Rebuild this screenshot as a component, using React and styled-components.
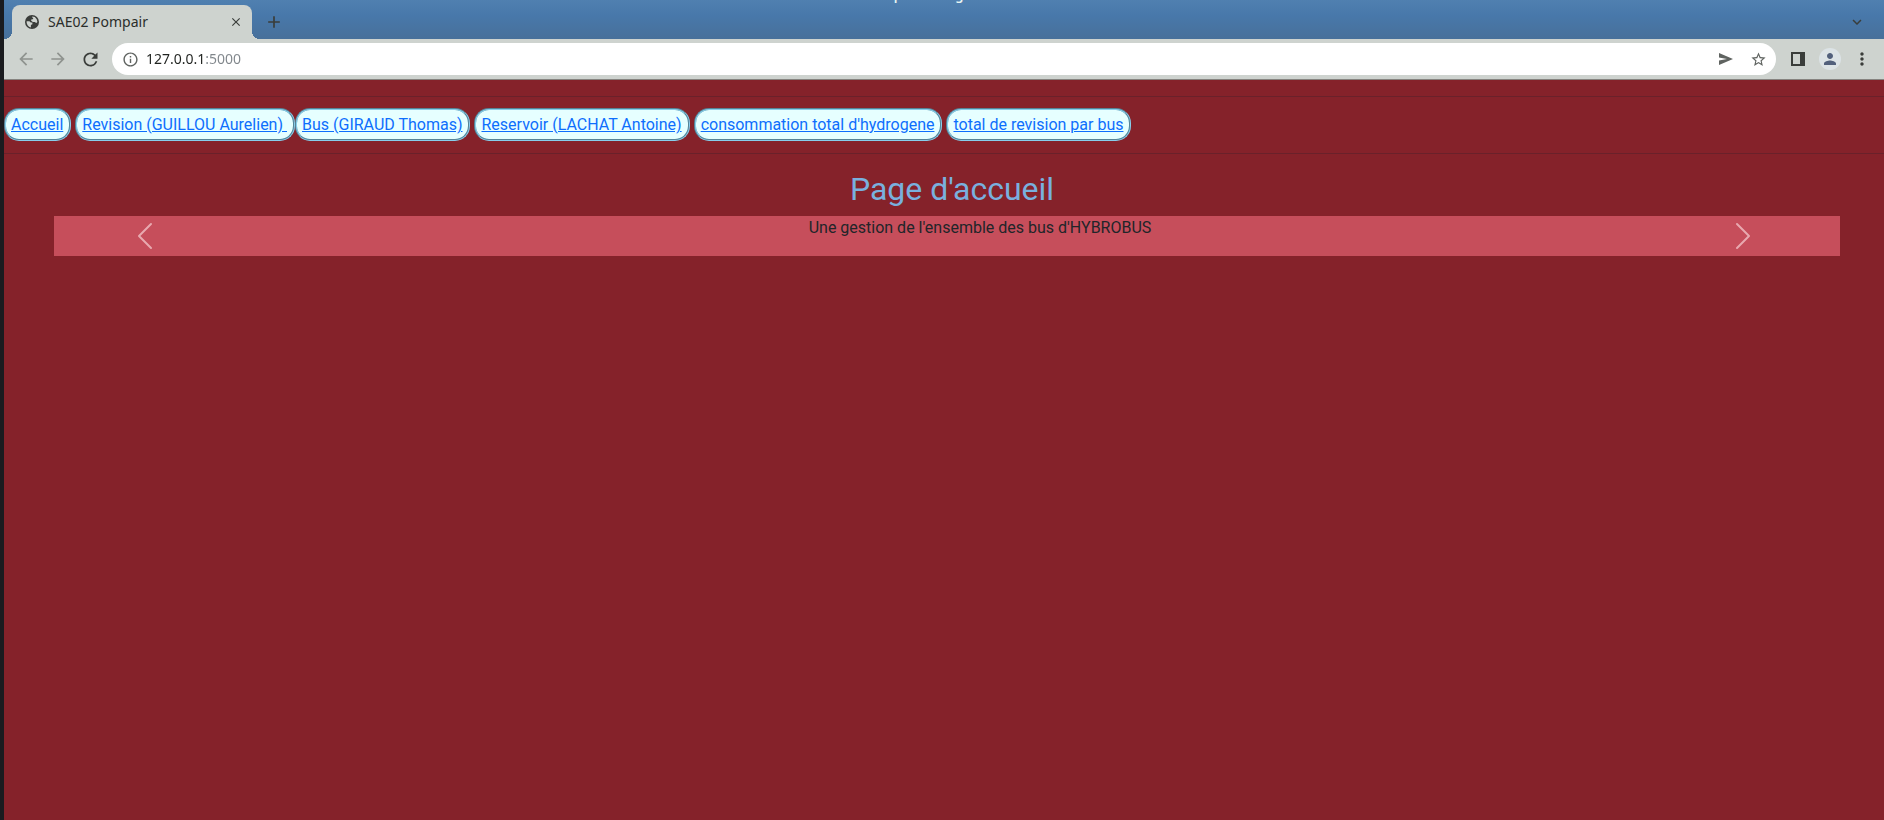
import React from "react";
import styled, { createGlobalStyle } from "styled-components";
import {
  MdArrowBack,
  MdArrowForward,
  MdRefresh,
  MdInfoOutline,
  MdStarOutline,
  MdMoreVert,
  MdPerson,
  MdAdd,
  MdClose,
  MdKeyboardArrowDown,
} from "react-icons/md";

const GlobalStyle = createGlobalStyle`
  *, *::before, *::after { box-sizing: border-box; }
  html, body, #root { height: 100%; }
  body {
    margin: 0;
    background: #85222a;
    color: #212529;
    font-family: Roboto, "Noto Sans", sans-serif;
    font-size: 16px;
    line-height: 24px;
  }
`;

const Window = styled.div`
  min-height: 100%;
  display: flex;
  flex-direction: column;
  border-left: 4px solid #1a1b1f;
`;

const TitleBar = styled.div`
  height: 3px;
  display: flex;
  align-items: flex-end;
  justify-content: center;
  overflow: hidden;
  padding-right: 36px;
  color: #e8f4f2;
  font: 600 13px/16px "Noto Sans", sans-serif;
`;

const TabStrip = styled.header`
  background: linear-gradient(#5080b0, #4878aa 40%, #48709a);
`;

const TabRow = styled.div`
  display: flex;
  align-items: center;
  height: 36px;
  padding: 2px 16px 0 8px;
`;

const Tab = styled.div`
  position: relative;
  display: flex;
  align-items: center;
  gap: 8px;
  width: 240px;
  height: 34px;
  padding: 0 8px 0 12px;
  border-radius: 8px 8px 0 0;
  background: #ced3cf;
  color: #2b2e2b;
  font: 14px/20px "Noto Sans", sans-serif;

  &::before,
  &::after {
    content: "";
    position: absolute;
    bottom: 0;
    width: 8px;
    height: 8px;
  }
  &::before {
    right: 100%;
    background: radial-gradient(circle at 0 0, transparent 8px, #ced3cf 8px);
  }
  &::after {
    left: 100%;
    background: radial-gradient(circle at 100% 0, transparent 8px, #ced3cf 8px);
  }
`;

const TabTitle = styled.span`
  flex: 1;
`;

const IconButton = styled.button`
  display: flex;
  align-items: center;
  justify-content: center;
  flex: none;
  width: ${(p) => p.$size || 32}px;
  height: ${(p) => p.$size || 32}px;
  margin: 0;
  padding: 0;
  border: 0;
  border-radius: 50%;
  background: none;
  color: ${(p) => p.$color || "#3a3d3a"};

  svg {
    stroke: ${(p) => (p.$bold ? "currentColor" : "none")};
  }
`;

const Spacer = styled.div`
  flex: 1;
`;

const Toolbar = styled.div`
  display: flex;
  align-items: center;
  height: 41px;
  padding: 0 6px;
  background: #ced3cf;
  border-bottom: 1px solid #86837f;
`;

const AddressBar = styled.form`
  flex: 1;
  display: flex;
  align-items: center;
  height: 32px;
  margin: 0 6px;
  padding: 0 2px;
  border-radius: 16px;
  background: #fff;
`;

const AddressInput = styled.input`
  flex: 1;
  min-width: 0;
  padding: 0;
  border: 0;
  outline: 0;
  background: linear-gradient(to right, #202320 59px, #80868b 59px);
  background-clip: text;
  -webkit-background-clip: text;
  color: transparent;
  font: 14px/20px "Noto Sans", sans-serif;
`;

const Avatar = styled.span`
  display: flex;
  align-items: center;
  justify-content: center;
  width: 22px;
  height: 22px;
  border-radius: 50%;
  background: #dce3e6;
`;

const Page = styled.main`
  flex: 1;
  display: flow-root;
`;

const Rule = styled.hr`
  height: 1px;
  margin: ${(p) => p.$margin};
  border: 0;
  background: #6a212a;
`;

const Nav = styled.nav`
  display: flex;
  flex-wrap: wrap;
`;

const NavLink = styled.a`
  margin-right: ${(p) => (p.$joined ? 0 : 4)}px;
  padding: 3px 6px 2px 5px;
  border: 2px groove skyblue;
  border-radius: 15px;
  background: #e6ffff;
  color: #0d6efd;
  white-space: pre;
`;

const Title = styled.h2`
  margin: 0 0 8px;
  padding-left: 16px;
  color: #79b0de;
  font-size: 32px;
  font-weight: 400;
  line-height: 38px;
  text-align: center;
`;

const Carousel = styled.section`
  display: flex;
  align-items: center;
  height: 40px;
  margin: 0 44px 0 50px;
  padding: 0 81px 0 75px;
  background: #c64e5b;
`;

const Slide = styled.p`
  flex: 1;
  align-self: flex-start;
  margin: 0;
  padding-left: 72px;
  text-align: center;
`;

const links = [
  { label: "Accueil" },
  { label: "Revision (GUILLOU Aurelien) ", joined: true },
  { label: "Bus (GIRAUD Thomas)" },
  { label: "Reservoir (LACHAT Antoine)" },
  { label: "consommation total d'hydrogene" },
  { label: "total de revision par bus" },
];

const Globe = () => (
  <svg width="16" height="16" viewBox="0 0 16 16" aria-hidden="true">
    <circle cx="8" cy="8" r="7" fill="#3a3d3a" />
    <path
      d="M2.600 7.200h2.800l1.400 1.200h1.600v1.900l-1.500.7v2.400A5.600 5.600 0 0 1 2.600 7.200zM8.200 2.500l2.600.6 1.900 2.200.7 2.600-1.100 1.200-1.600-1.100H8.800L7 6.600l.6-1.400h1.500V4l-.9-.5z"
      fill="#ced3cf"
    />
  </svg>
);

const Send = () => (
  <svg width="16" height="16" viewBox="0 0 16 16" aria-hidden="true">
    <path d="M1 2l14 6-14 6V9.500l8-1.500-8-1.500z" fill="#5f6360" />
  </svg>
);

const SidePanel = () => (
  <svg width="14" height="14" viewBox="0 0 14 14" aria-hidden="true">
    <path d="M0 0h14v14H0zM2 2v10h7V2z" fill="#3a3d3a" fillRule="evenodd" />
  </svg>
);

const Chevron = ({ next }) => (
  <svg width="32" height="32" viewBox="0 0 16 16" aria-hidden="true">
    <path
      fill="currentColor"
      d={
        next
          ? "M4.646 1.646a.5.5 0 0 1 .708 0l6 6a.5.5 0 0 1 0 .708l-6 6a.5.5 0 0 1-.708-.708L10.293 8 4.646 2.354a.5.5 0 0 1 0-.708z"
          : "M11.354 1.646a.5.5 0 0 1 0 .708L5.707 8l5.647 5.646a.5.5 0 0 1-.708.708l-6-6a.5.5 0 0 1 0-.708l6-6a.5.5 0 0 1 .708 0z"
      }
    />
  </svg>
);

export default function App() {
  return (
    <Window>
      <GlobalStyle />
      <TabStrip>
        <TitleBar>SAE02 Pompair - Google Chrome</TitleBar>
        <TabRow>
          <Tab>
            <Globe />
            <TabTitle>SAE02 Pompair</TabTitle>
            <IconButton $size={16} $bold aria-label="Close tab">
              <MdClose size={14} />
            </IconButton>
          </Tab>
          <IconButton $size={44} aria-label="New tab">
            <MdAdd size={20} />
          </IconButton>
          <Spacer />
          <IconButton $size={22} $bold aria-label="Search tabs">
            <MdKeyboardArrowDown size={18} />
          </IconButton>
        </TabRow>
      </TabStrip>
      <Toolbar>
        <IconButton $color="#8f938f" aria-label="Back">
          <MdArrowBack size={20} />
        </IconButton>
        <IconButton $color="#8f938f" aria-label="Forward">
          <MdArrowForward size={20} />
        </IconButton>
        <IconButton aria-label="Reload">
          <MdRefresh size={21} />
        </IconButton>
        <AddressBar>
          <IconButton type="button" $color="#5f6360" aria-label="Site information">
            <MdInfoOutline size={17} />
          </IconButton>
          <AddressInput aria-label="Address" defaultValue="127.0.0.1:5000" />
          <IconButton type="button" aria-label="Share this page">
            <Send />
          </IconButton>
          <IconButton type="button" $color="#5f6360" aria-label="Bookmark this page">
            <MdStarOutline size={17} />
          </IconButton>
        </AddressBar>
        <IconButton aria-label="Side panel">
          <SidePanel />
        </IconButton>
        <IconButton $color="#52607c" aria-label="Profile">
          <Avatar>
            <MdPerson size={18} />
          </Avatar>
        </IconButton>
        <IconButton aria-label="Menu">
          <MdMoreVert size={20} />
        </IconButton>
      </Toolbar>
      <Page>
        <Rule $margin="16px 0 11px" />
        <Nav>
          {links.map((link) => (
            <NavLink key={link.label} href="#" $joined={link.joined}>
              {link.label}
            </NavLink>
          ))}
        </Nav>
        <Rule $margin="12px 0 16px" />
        <Title>Page d'accueil</Title>
        <Carousel aria-label="Présentation">
          <IconButton $color="#e8a9af" aria-label="Previous">
            <Chevron />
          </IconButton>
          <Slide>Une gestion de l'ensemble des bus d'HYBROBUS</Slide>
          <IconButton $color="#e8a9af" aria-label="Next">
            <Chevron next />
          </IconButton>
        </Carousel>
      </Page>
    </Window>
  );
}
